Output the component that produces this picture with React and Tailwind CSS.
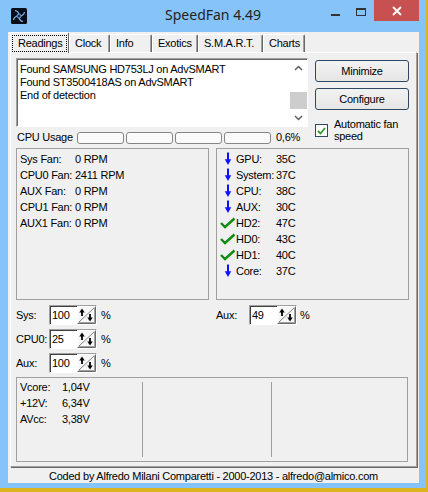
import React from 'react';

// small drawings used in the window
const FanIcon = () => (
  <svg width="16" height="16" viewBox="0 0 16 16">
    <rect x="0" y="0" width="16" height="16" rx="1.5" fill="#0a0e18" />
    <circle cx="8" cy="8" r="2" fill="#1b2a44" stroke="#6fa8e8" strokeWidth="1" />
    <g stroke="#7ab4f0" strokeWidth="1.2" fill="none">
      <path d="M8 6 Q7 3 4 2.5" />
      <path d="M10 8 Q13 7 13.5 4" />
      <path d="M8 10 Q9 13 12 13.5" />
      <path d="M6 8 Q3 9 2.5 12" />
    </g>
  </svg>
);

const DownArrow = () => (
  <svg width="16" height="14" viewBox="0 0 16 14">
    <rect x="7" y="0.5" width="2" height="8" fill="#1010ff" />
    <polygon points="4.8,7.2 11.2,7.2 8,13" fill="#1010ff" />
  </svg>
);

const Check = () => (
  <svg width="16" height="14" viewBox="0 0 16 14">
    <polyline points="1,7 5,11 14.5,2.5" fill="none" stroke="#138a13" strokeWidth="2.4" />
  </svg>
);

const Chevron = ({ up }) => (
  <svg width="9" height="6" viewBox="0 0 9 6">
    <polyline
      points={up ? '1,5 4.5,1.5 8,5' : '1,1 4.5,4.5 8,1'}
      fill="none"
      stroke="#606060"
      strokeWidth="1.5"
    />
  </svg>
);

const SpinButton = () => (
  <svg width="19" height="18" viewBox="0 0 19 18">
    <rect x="0" y="0" width="19" height="18" fill="#f7f7f7" />
    <path d="M0.5 17.5 V0.5 H18.5" stroke="#ffffff" fill="none" />
    <path d="M0.5 17.5 H18.5 V0.5" stroke="#6a6a6a" fill="none" />
    <path d="M1.5 16.5 H17.5 V1.5" stroke="#a0a0a0" fill="none" />
    <line x1="2" y1="16" x2="17" y2="2" stroke="#808080" strokeWidth="1" />
    <line x1="5" y1="4" x2="5" y2="10" stroke="#000" strokeWidth="1.8" />
    <polygon points="2.3,6.5 7.7,6.5 5,2.5" fill="#000" />
    <line x1="13" y1="8" x2="13" y2="14" stroke="#000" strokeWidth="1.8" />
    <polygon points="10.3,11.5 15.7,11.5 13,15.5" fill="#000" />
  </svg>
);

const Spin = ({ value }) => (
  <div className="flex h-[20px] w-[48px] border border-t-[#a0a0a0] border-l-[#a0a0a0] border-r-white border-b-white">
    <div className="flex-1 bg-white pl-[2px] leading-[18px] shadow-[inset_1px_1px_0_#404040]">{value}</div>
    <SpinButton />
  </div>
);

const tabs = [
  { label: 'Readings', w: 'w-[59px]', active: true },
  { label: 'Clock', w: 'w-[41px]' },
  { label: 'Info', w: 'w-[42px]' },
  { label: 'Exotics', w: 'w-[46px]' },
  { label: 'S.M.A.R.T.', w: 'w-[65px]' },
  { label: 'Charts', w: 'w-[42px]' },
];

const fans = [
  ['Sys Fan:', '0 RPM'],
  ['CPU0 Fan:', '2411 RPM'],
  ['AUX Fan:', '0 RPM'],
  ['CPU1 Fan:', '0 RPM'],
  ['AUX1 Fan:', '0 RPM'],
];

const temps = [
  ['GPU:', '35C', 'down'],
  ['System:', '37C', 'down'],
  ['CPU:', '38C', 'down'],
  ['AUX:', '30C', 'down'],
  ['HD2:', '47C', 'ok'],
  ['HD0:', '43C', 'ok'],
  ['HD1:', '40C', 'ok'],
  ['Core:', '37C', 'down'],
];

const volts = [
  ['Vcore:', '1,04V'],
  ['+12V:', '6,34V'],
  ['AVcc:', '3,38V'],
];

export default function App() {
  return (
    <div className="h-[492px] w-[428px] overflow-hidden bg-[#dcb420] font-['Liberation_Sans',Arial,sans-serif] text-[11px] tracking-[-0.25px] text-black">
      {/* window */}
      <div className="flex h-[488px] w-[426px] flex-col bg-[#86c3f9]">
        {/* title bar */}
        <div className="grid h-[32px] grid-cols-[1fr_auto_1fr]">
          <div className="pl-[11px] pt-[8px]">
            <FanIcon />
          </div>
          <div className="pt-[5px] font-['Noto_Sans',sans-serif] text-[14px] leading-[20px] tracking-normal text-[#222]">
            SpeedFan 4.49
          </div>
          <div className="flex justify-end pr-[7px]">
            <div className="flex h-[21px] w-[26px] items-start justify-center pt-[14px]">
              <div className="h-[2px] w-[9px] bg-[#333]" />
            </div>
            <div className="flex h-[21px] w-[26px] items-start justify-center pt-[8px]">
              <div className="h-[8px] w-[10px] border border-t-2 border-[#333]" />
            </div>
            <div className="flex h-[21px] w-[45px] items-center justify-center bg-[#c75050]">
              <svg width="10" height="10" viewBox="0 0 10 10">
                <path d="M1 1 L9 9 M9 1 L1 9" stroke="#fff" strokeWidth="1.8" />
              </svg>
            </div>
          </div>
        </div>

        {/* client area */}
        <div className="ml-[8px] h-[451px] w-[411px] bg-[#f0f0f0]">
          {/* tabs */}
          <div className="flex h-[20px] items-end pl-[2px]">
            {tabs.map((t) =>
              t.active ? (
                <div
                  key={t.label}
                  className={`${t.w} relative z-10 -mb-px flex h-[21px] items-center rounded-t-[2px] border-t border-l border-r border-t-white border-l-white border-r-[#696969] bg-[#f0f0f0] pl-[1px]`}
                >
                  <span className="flex h-[17px] w-[55px] items-center border border-dotted border-black pl-[5px]">
                    {t.label}
                  </span>
                </div>
              ) : (
                <div
                  key={t.label}
                  className={`${t.w} flex h-[18px] items-center rounded-t-[2px] border-t border-l border-r border-t-white border-l-white border-r-[#696969] pl-[5px] shadow-[inset_-1px_0_0_#a0a0a0]`}
                >
                  {t.label}
                </div>
              )
            )}
          </div>

          {/* tab panel */}
          <div className="ml-[2px] h-[415px] w-[407px] border-t border-l border-r border-b border-t-white border-l-white border-r-[#a0a0a0] border-b-[#a0a0a0] px-[5px] shadow-[1px_1px_0_#696969]">
            {/* top section */}
            <div className="flex h-[95px] pt-[5px]">
              <div className="w-[292px]">
                <div className="flex h-[69px] border border-t-[#a0a0a0] border-l-[#a0a0a0] border-r-white border-b-white bg-white shadow-[inset_1px_1px_0_#696969]">
                  <div className="flex-1 pl-[3px] pt-[4px] leading-[13px]">
                    <div>Found SAMSUNG HD753LJ on AdvSMART</div>
                    <div>Found ST3500418AS on AdvSMART</div>
                    <div>End of detection</div>
                  </div>
                  <div className="flex w-[17px] flex-col">
                    <div className="flex h-[17px] items-center justify-center">
                      <Chevron up />
                    </div>
                    <div className="flex-1" />
                    <div className="h-[17px] bg-[#cdcdcd]" />
                    <div className="flex h-[17px] items-center justify-center">
                      <Chevron />
                    </div>
                  </div>
                </div>
                <div className="mt-[4px] flex h-[13px] items-center">
                  <div className="w-[61px] pl-[1px]">CPU Usage</div>
                  <div className="flex gap-[2px]">
                    {[0, 1, 2, 3].map((i) => (
                      <div key={i} className="h-[12px] w-[47px] rounded-[3px] border border-[#868686] bg-[#fafafa]" />
                    ))}
                  </div>
                  <div className="ml-[5px]">0,6%</div>
                </div>
              </div>

              <div className="ml-[7px] w-[94px]">
                <div className="mt-[2px] flex h-[22px] items-center justify-center rounded-[3px] border border-[#2f4861] bg-gradient-to-b from-[#f2f2f2] to-[#e6e6e6]">
                  Minimize
                </div>
                <div className="mt-[6px] flex h-[22px] items-center justify-center rounded-[3px] border border-[#2f4861] bg-gradient-to-b from-[#f2f2f2] to-[#e6e6e6]">
                  Configure
                </div>
                <div className="mt-[8px] flex">
                  <div className="mt-[6px] flex h-[13px] w-[13px] items-center justify-center border border-[#2f4861] bg-white">
                    <svg width="9" height="8" viewBox="0 0 9 8">
                      <polyline points="1,4 3.5,6.5 8,1" fill="none" stroke="#2e9a2e" strokeWidth="1.8" />
                    </svg>
                  </div>
                  <div className="ml-[6px] leading-[12px]">
                    Automatic fan
                    <br />
                    speed
                  </div>
                </div>
              </div>
            </div>

            {/* fans and temperatures */}
            <div className="flex h-[152px]">
              <div className="w-[193px] border border-[#a0a0a0] pl-[3px] pt-[2px] leading-[16px]">
                {fans.map(([k, v]) => (
                  <div key={k} className="flex">
                    <div className="w-[55px]">{k}</div>
                    <div>{v}</div>
                  </div>
                ))}
              </div>
              <div className="ml-[7px] w-[193px] border border-[#a0a0a0] pl-[3px] pt-[2px] leading-[16px]">
                {temps.map(([k, v, s]) => (
                  <div key={k} className="flex items-center">
                    <div className="flex w-[16px] items-center">{s === 'ok' ? <Check /> : <DownArrow />}</div>
                    <div className="w-[40px]">{k}</div>
                    <div>{v}</div>
                  </div>
                ))}
              </div>
            </div>

            {/* fan speed spinners */}
            <div className="flex h-[77px] pt-[5px]">
              <div className="flex w-[200px] flex-col gap-[4px]">
                {[
                  ['Sys:', '100'],
                  ['CPU0:', '25'],
                  ['Aux:', '100'],
                ].map(([k, v]) => (
                  <div key={k} className="flex h-[20px] items-center">
                    <div className="w-[33px]">{k}</div>
                    <Spin value={v} />
                    <div className="ml-[4px]">%</div>
                  </div>
                ))}
              </div>
              <div className="flex h-[20px] items-center">
                <div className="w-[33px]">Aux:</div>
                <Spin value="49" />
                <div className="ml-[3px]">%</div>
              </div>
            </div>

            {/* voltages */}
            <div className="flex h-[85px] w-[392px] border border-[#a0a0a0]">
              <div className="w-[125px] pl-[3px] pt-[1px] leading-[16px]">
                {volts.map(([k, v]) => (
                  <div key={k} className="flex">
                    <div className="w-[42px]">{k}</div>
                    <div>{v}</div>
                  </div>
                ))}
              </div>
              <div className="my-[4px] w-[129px] border-l border-[#a0a0a0]" />
              <div className="my-[4px] flex-1 border-l border-[#a0a0a0]" />
            </div>
          </div>

          {/* status bar */}
          <div className="h-[15px] text-center leading-[19px]">
            Coded by Alfredo Milani Comparetti - 2000-2013 - alfredo@almico.com
          </div>
        </div>
      </div>
    </div>
  );
}
